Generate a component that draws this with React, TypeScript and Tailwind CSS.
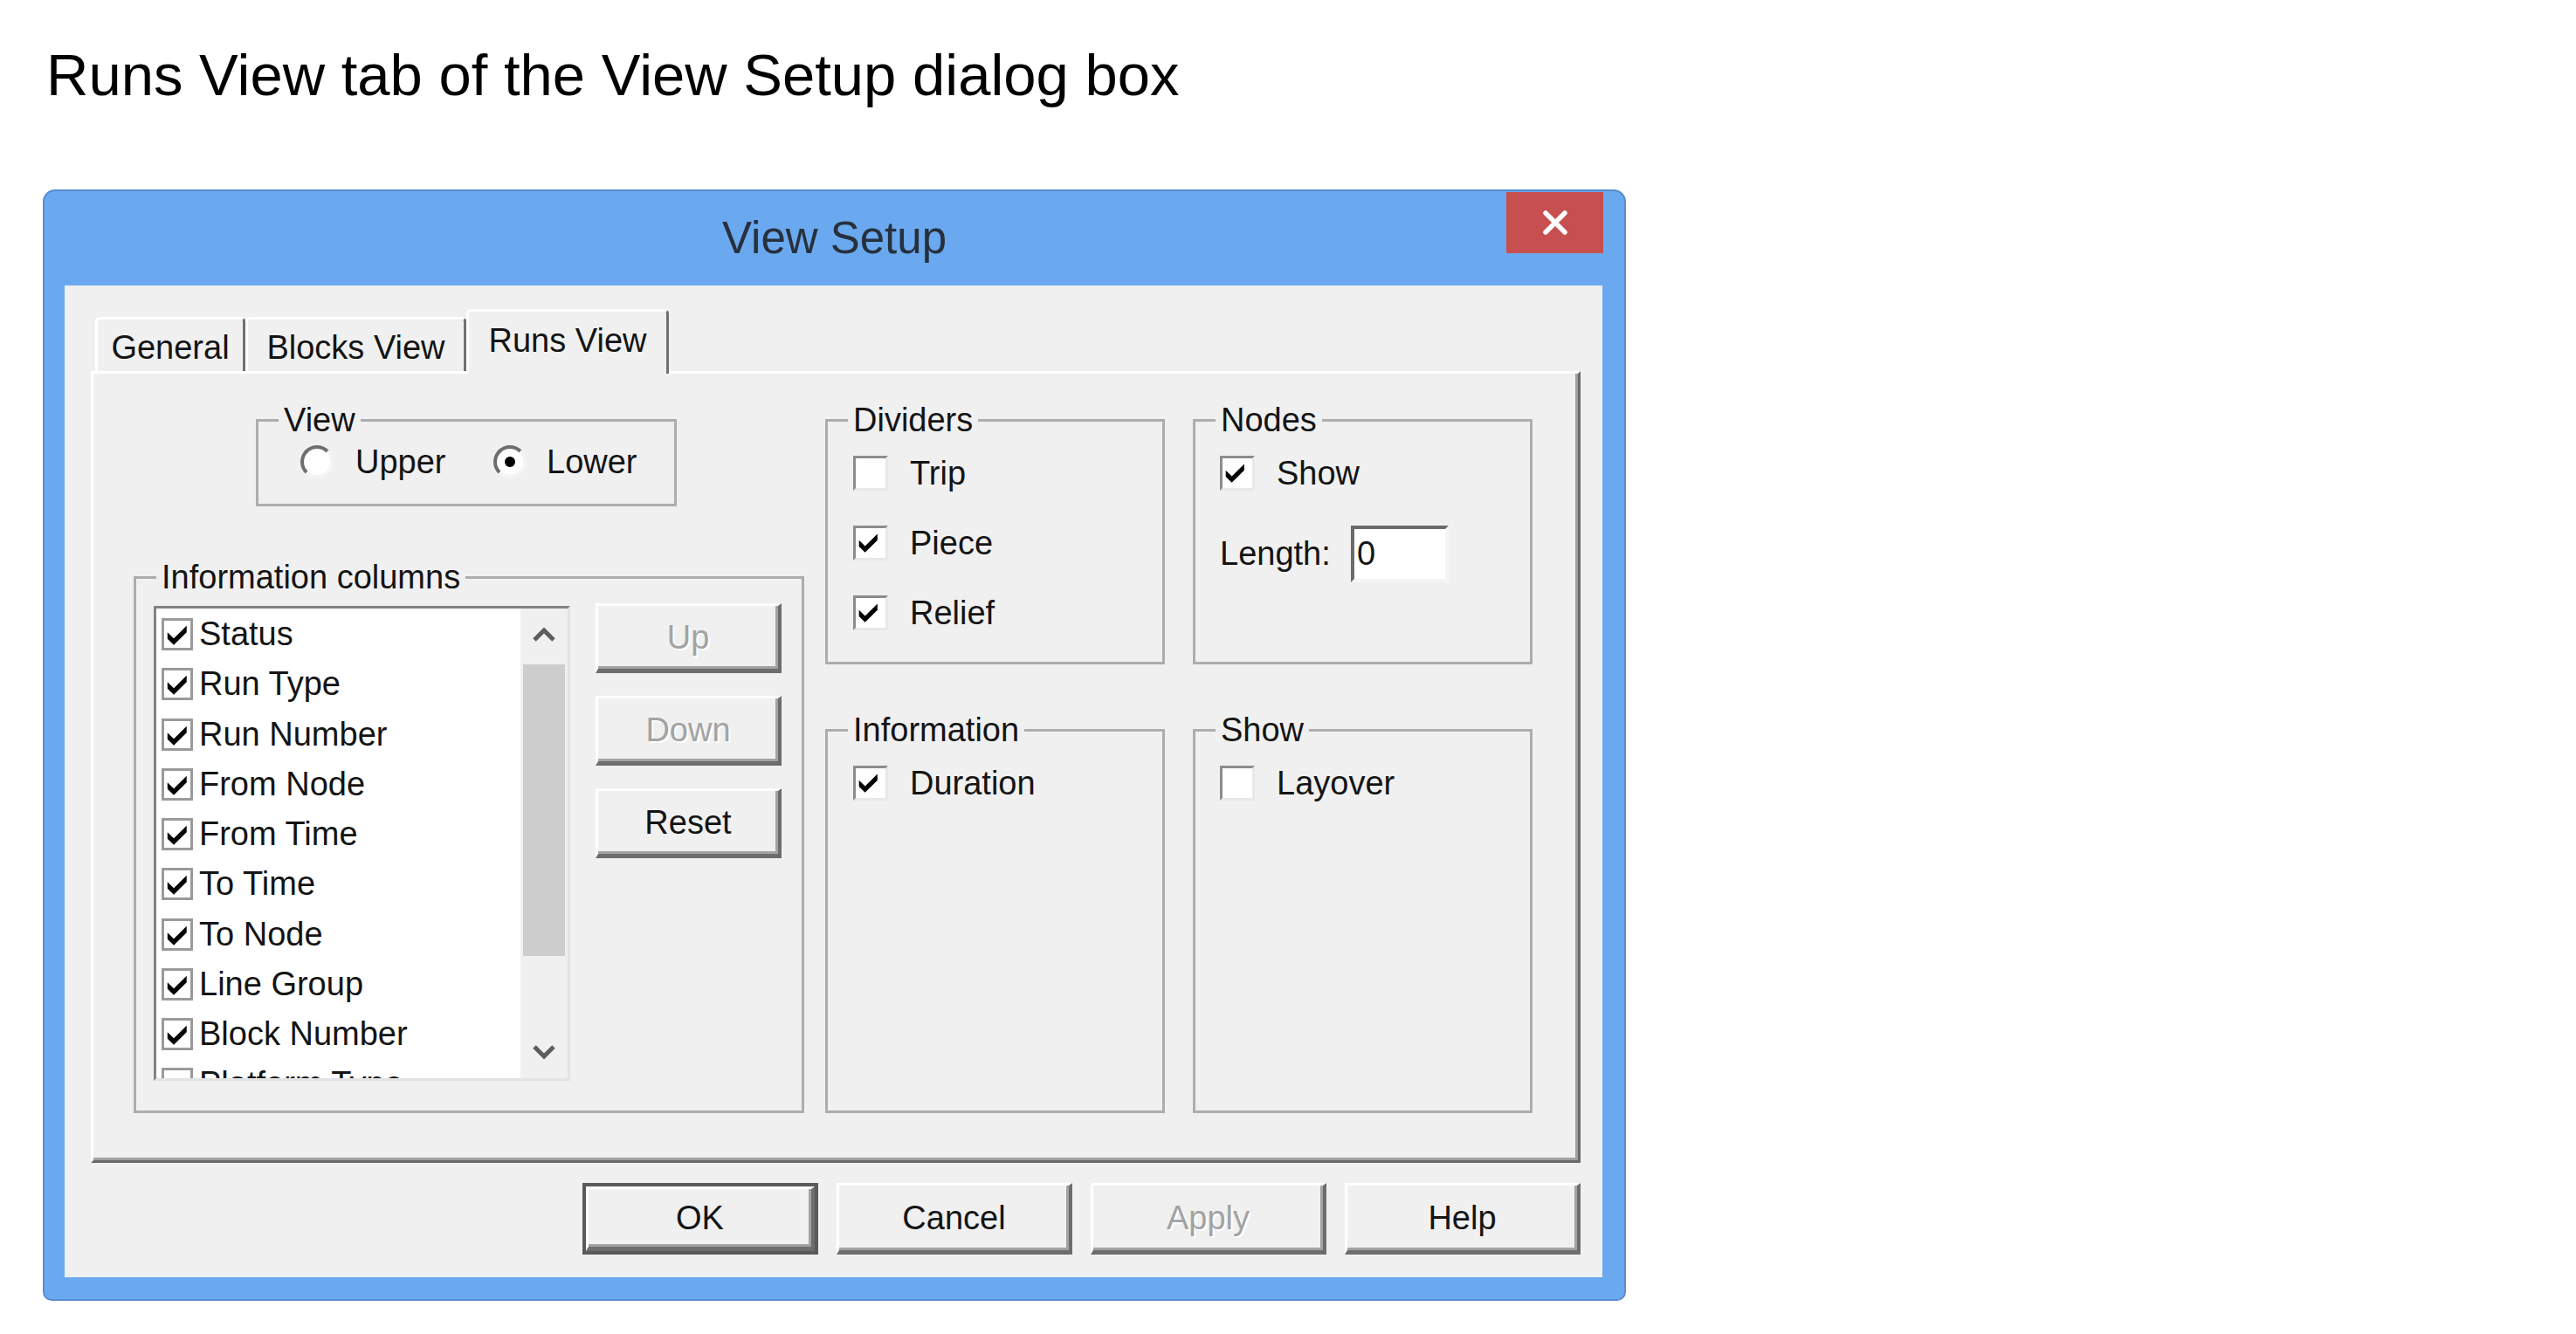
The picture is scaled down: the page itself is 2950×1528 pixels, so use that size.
import React from "react";

function CheckMark() {
  return (
    <svg viewBox="0 0 12 12" className="w-full h-full">
      <polygon points="1.2,5 4.3,8 10.6,1.8 10.6,5 4.3,11.2 1.2,8.2" fill="#000" />
    </svg>
  );
}

function DlgCheckbox({ checked }: { checked: boolean }) {
  return (
    <div className="w-[40px] h-[40px] shrink-0 bg-white border-[3px] border-t-[#8c8c8c] border-l-[#8c8c8c] border-r-[#e8e8e8] border-b-[#e8e8e8] pt-[2px] pl-[1px] pr-[6px] pb-[4px]">
      {checked ? <CheckMark /> : null}
    </div>
  );
}

function ListCheckbox({ checked }: { checked: boolean }) {
  return (
    <div className="w-[36px] h-[37px] shrink-0 bg-white border-[3px] border-[#9a9a9a] p-[1px]">
      {checked ? <CheckMark /> : null}
    </div>
  );
}

function Radio({ checked }: { checked: boolean }) {
  return (
    <div className="w-[38px] h-[38px] shrink-0 rounded-full bg-white border-[4px] border-t-[#6e6e6e] border-l-[#6e6e6e] border-r-[#f4f4f4] border-b-[#f4f4f4] flex items-center justify-center">
      {checked ? <div className="w-[12px] h-[12px] rounded-full bg-black" /> : null}
    </div>
  );
}

function Group({
  label,
  className,
  children,
}: {
  label: string;
  className: string;
  children?: React.ReactNode;
}) {
  return (
    <div className={"relative border-[3px] border-[#adadad] " + className}>
      <span className="absolute -top-[22px] left-[23px] px-[6px] bg-[#f0f0f0] leading-[40px] whitespace-nowrap">
        {label}
      </span>
      {children}
    </div>
  );
}

function RaisedButton({
  label,
  disabled,
  className,
}: {
  label: string;
  disabled?: boolean;
  className: string;
}) {
  return (
    <div
      className={
        "flex items-center justify-center bg-[#f0f0f0] border-t-[3px] border-l-[3px] border-r-[4px] border-b-[5px] border-t-white border-l-white border-r-[#6d6d6d] border-b-[#6d6d6d] shadow-[inset_-3px_-3px_0_#a3a3a3] " +
        className
      }
    >
      <span
        className={
          disabled
            ? "text-[#a3a3a3] [text-shadow:2px_2px_0_#ffffff]"
            : "text-[#141414]"
        }
      >
        {label}
      </span>
    </div>
  );
}

function Chevron({ up }: { up: boolean }) {
  return (
    <svg width="28" height="18" viewBox="0 0 28 18">
      <polyline
        points={up ? "3,15 14,4 25,15" : "3,3 14,14 25,3"}
        fill="none"
        stroke="#5d5d5d"
        strokeWidth="5"
      />
    </svg>
  );
}

const columns: { name: string; checked: boolean }[] = [
  { name: "Status", checked: true },
  { name: "Run Type", checked: true },
  { name: "Run Number", checked: true },
  { name: "From Node", checked: true },
  { name: "From Time", checked: true },
  { name: "To Time", checked: true },
  { name: "To Node", checked: true },
  { name: "Line Group", checked: true },
  { name: "Block Number", checked: true },
  { name: "Platform Type", checked: false },
];

export default function App() {
  return (
    <div className="w-[2950px] h-[1528px] bg-white overflow-hidden font-['Liberation_Sans',Arial,sans-serif] text-black">
      <div className="pl-[53px] pt-[52px] text-[67px] leading-none">
        Runs View tab of the View Setup dialog box
      </div>

      <div className="mt-[98px] ml-[49px] w-[1813px] h-[1273px] bg-[#6aa9ef] border-2 border-[#5a8cd0] rounded-t-[14px] rounded-b-[10px] flex flex-col">
        {/* Title bar */}
        <div className="relative h-[108px] shrink-0 flex items-center justify-center text-[51px] text-[#27303c]">
          <span>View Setup</span>
          <div className="absolute top-[1px] right-[24px] w-[111px] h-[70px] bg-[#c74f4f] flex items-center justify-center">
            <svg width="30" height="30" viewBox="0 0 30 30">
              <path
                d="M4 4 L26 26 M26 4 L4 26"
                stroke="#ffffff"
                strokeWidth="5.5"
                strokeLinecap="round"
              />
            </svg>
          </div>
        </div>

        {/* Client area */}
        <div className="ml-[23px] mr-[25px] mb-[25px] flex-1 bg-[#f0f0f0] pt-[27px] pl-[30px] pr-[25px] flex flex-col text-[38px] text-[#141414]">
          {/* Tabs */}
          <div className="h-[71px] shrink-0 flex items-end pl-[5px]">
            <div className="w-[172px] h-[62px] flex items-center justify-center pt-[6px] border-t-[3px] border-l-[3px] border-r-[3px] border-t-white border-l-white border-r-[#707070] rounded-t-[5px]">
              General
            </div>
            <div className="w-[253px] h-[62px] flex items-center justify-center pt-[6px] border-t-[3px] border-l-[3px] border-r-[3px] border-t-white border-l-white border-r-[#707070] rounded-t-[5px]">
              Blocks View
            </div>
            <div className="relative z-10 -mb-[3px] w-[232px] h-[74px] bg-[#f0f0f0] flex items-center justify-center pb-[4px] border-t-[3px] border-l-[3px] border-r-[3px] border-t-white border-l-white border-r-[#707070] rounded-t-[5px]">
              Runs View
            </div>
          </div>

          {/* Tab panel */}
          <div className="w-[1706px] h-[907px] shrink-0 flex items-start pl-[46px] pt-[52px] border-[3px] border-t-white border-l-white border-r-[#696969] border-b-[#696969] shadow-[inset_-3px_-3px_0_#a0a0a0]">
            {/* Left column */}
            <div className="w-[768px] flex flex-col">
              <Group label="View" className="ml-[140px] w-[482px] h-[100px]">
                <div className="flex items-center pl-[48px] pt-[24px]">
                  <div className="w-[221px] h-[44px] flex items-center gap-[25px]">
                    <Radio checked={false} />
                    <span>Upper</span>
                  </div>
                  <div className="h-[44px] flex items-center gap-[23px]">
                    <Radio checked={true} />
                    <span>Lower</span>
                  </div>
                </div>
              </Group>

              <Group label="Information columns" className="mt-[80px] w-[768px] h-[615px]">
                <div className="flex items-start pl-[20px] pt-[28px]">
                  <div className="mt-[3px] w-[477px] h-[544px] bg-white border-[3px] border-t-[#828282] border-l-[#828282] border-r-[#e3e3e3] border-b-[#e3e3e3] flex overflow-hidden">
                    <div className="flex-1 flex flex-col overflow-hidden pt-[1px]">
                      {columns.map((c) => (
                        <div
                          key={c.name}
                          className="h-[57.25px] shrink-0 flex items-center pl-[6px] gap-[7px] whitespace-nowrap"
                        >
                          <ListCheckbox checked={c.checked} />
                          <span>{c.name}</span>
                        </div>
                      ))}
                    </div>
                    <div className="w-[54px] shrink-0 bg-[#f0f0f0] flex flex-col">
                      <div className="h-[60px] shrink-0 flex items-center justify-center">
                        <Chevron up={true} />
                      </div>
                      <div className="mt-[4px] mx-[3px] h-[334px] bg-[#cdcdcd]" />
                      <div className="flex-1" />
                      <div className="h-[60px] shrink-0 flex items-center justify-center">
                        <Chevron up={false} />
                      </div>
                    </div>
                  </div>

                  <div className="ml-[29px] flex flex-col gap-[26px]">
                    <RaisedButton label="Up" disabled className="w-[213px] h-[80px]" />
                    <RaisedButton label="Down" disabled className="w-[213px] h-[80px]" />
                    <RaisedButton label="Reset" className="w-[213px] h-[80px]" />
                  </div>
                </div>
              </Group>
            </div>

            {/* Middle column */}
            <div className="ml-[24px] w-[389px] flex flex-col">
              <Group label="Dividers" className="h-[281px]">
                <div className="pt-[19px] pl-[29px] flex flex-col">
                  <div className="h-[80px] flex items-center gap-[25px]">
                    <DlgCheckbox checked={false} />
                    <span>Trip</span>
                  </div>
                  <div className="h-[80px] flex items-center gap-[25px]">
                    <DlgCheckbox checked={true} />
                    <span>Piece</span>
                  </div>
                  <div className="h-[80px] flex items-center gap-[25px]">
                    <DlgCheckbox checked={true} />
                    <span>Relief</span>
                  </div>
                </div>
              </Group>
              <Group label="Information" className="mt-[74px] h-[440px]">
                <div className="pt-[19px] pl-[29px] flex flex-col">
                  <div className="h-[80px] flex items-center gap-[25px]">
                    <DlgCheckbox checked={true} />
                    <span>Duration</span>
                  </div>
                </div>
              </Group>
            </div>

            {/* Right column */}
            <div className="ml-[32px] w-[389px] flex flex-col">
              <Group label="Nodes" className="h-[281px]">
                <div className="pt-[19px] pl-[28px] flex flex-col">
                  <div className="h-[80px] flex items-center gap-[25px]">
                    <DlgCheckbox checked={true} />
                    <span>Show</span>
                  </div>
                  <div className="mt-[20px] h-[65px] flex items-center">
                    <span className="w-[150px]">Length:</span>
                    <div className="w-[112px] h-[65px] bg-white border-[4px] border-t-[#6b6b6b] border-l-[#6b6b6b] border-r-[#f5f5f5] border-b-[#f5f5f5] pl-[3px] flex items-center">
                      0
                    </div>
                  </div>
                </div>
              </Group>
              <Group label="Show" className="mt-[74px] h-[440px]">
                <div className="pt-[19px] pl-[28px] flex flex-col">
                  <div className="h-[80px] flex items-center gap-[25px]">
                    <DlgCheckbox checked={false} />
                    <span>Layover</span>
                  </div>
                </div>
              </Group>
            </div>
          </div>

          {/* Bottom buttons */}
          <div className="mt-[23px] h-[82px] shrink-0 flex justify-end gap-[21px]">
            <div className="w-[270px] h-[82px] border-[4px] border-[#5a5a5a] flex">
              <RaisedButton label="OK" className="flex-1" />
            </div>
            <RaisedButton label="Cancel" className="w-[270px] h-[82px]" />
            <RaisedButton label="Apply" disabled className="w-[270px] h-[82px]" />
            <RaisedButton label="Help" className="w-[270px] h-[82px]" />
          </div>
        </div>
      </div>
    </div>
  );
}
